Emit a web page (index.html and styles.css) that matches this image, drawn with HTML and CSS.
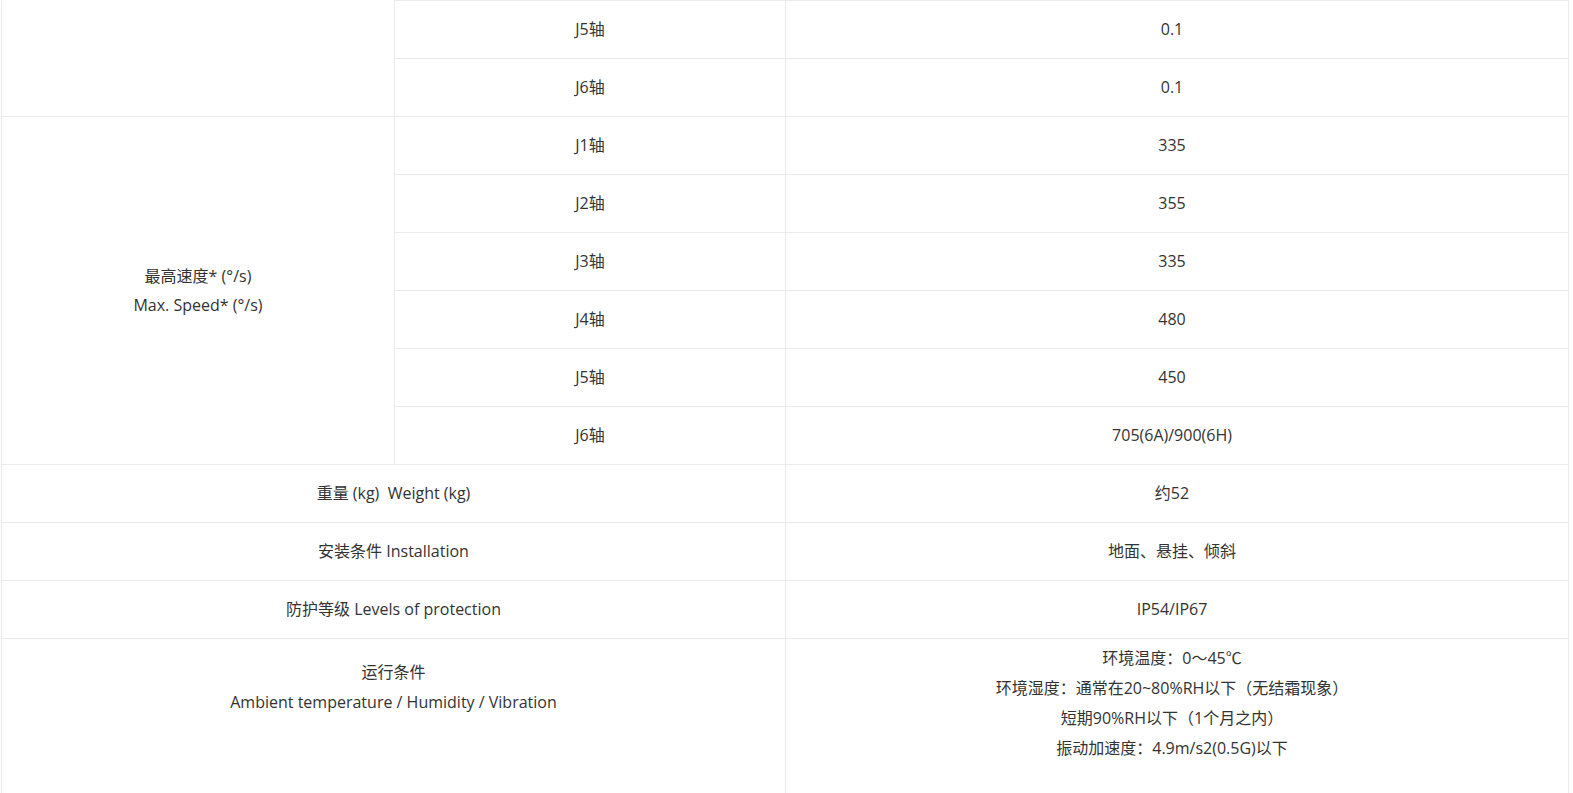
FILE: index.html
```html
<!DOCTYPE html>
<html lang="zh-CN">
<head>
<meta charset="utf-8">
<title>规格参数</title>
<link rel="stylesheet" href="styles.css">
</head>
<body>
<div class="wrap">
<table class="spec">
  <colgroup><col class="c1"><col class="c2"><col class="c3"></colgroup>
  <tbody>
    <tr><td rowspan="2" class="cont"></td><td>J5轴</td><td class="val">0.1</td></tr>
    <tr><td>J6轴</td><td class="val">0.1</td></tr>
    <tr><td rowspan="6">最高速度* (°/s)<br>Max. Speed* (°/s)</td><td>J1轴</td><td class="val">335</td></tr>
    <tr><td>J2轴</td><td class="val">355</td></tr>
    <tr><td>J3轴</td><td class="val">335</td></tr>
    <tr><td>J4轴</td><td class="val">480</td></tr>
    <tr><td>J5轴</td><td class="val">450</td></tr>
    <tr><td>J6轴</td><td class="val">705(6A)/900(6H)</td></tr>
    <tr><td colspan="2">重量 (kg)&nbsp; Weight (kg)</td><td class="val">约52</td></tr>
    <tr><td colspan="2">安装条件 Installation</td><td class="val">地面、悬挂、倾斜</td></tr>
    <tr><td colspan="2">防护等级 Levels of protection</td><td class="val">IP54/IP67</td></tr>
    <tr class="tall">
      <td colspan="2">运行条件<br>Ambient temperature / Humidity / Vibration</td>
      <td class="val multi">环境温度：0～45℃<br>环境湿度：通常在20~80%RH以下（无结霜现象）<br>短期90%RH以下（1个月之内）<br>振动加速度：4.9m/s2(0.5G)以下</td>
    </tr>
  </tbody>
</table>
</div>
</body>
</html>
```

FILE: styles.css
```css
html, body {
  margin: 0;
  padding: 0;
  background: #fff;
}

.wrap {
  padding-left: 1px;
}

.spec {
  width: 1568px;
  border-collapse: collapse;
  table-layout: fixed;
  font-family: "Open Sans", "Noto Sans CJK SC", sans-serif;
  font-size: 16px;
  color: #333;
}

.c1 { width: 393px; }
.c2 { width: 391px; }

.spec td {
  border: 1px solid #ebebeb;
  text-align: center;
  vertical-align: middle;
  padding: 14px 10px;
  line-height: 29px;
  height: 29px;
}

.spec td.val {
  padding-left: 8px;
  padding-right: 18px;
}

.spec td.cont {
  border-top-style: hidden;
}

.spec tr.tall td {
  vertical-align: top;
  line-height: 30px;
  height: 146px;
  padding-top: 18px;
  padding-bottom: 0;
}

.spec tr.tall td.multi {
  padding-top: 4px;
}
```
